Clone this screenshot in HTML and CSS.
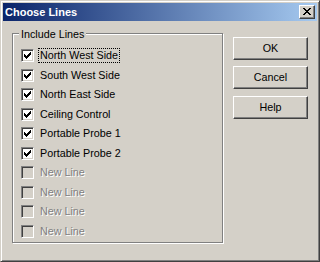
FILE: index.html
```
<!DOCTYPE html>
<html>
<head>
<meta charset="utf-8">
<title>Choose Lines</title>
<link rel="stylesheet" href="styles.css">
</head>
<body>
<div class="window">
  <div class="titlebar">
    <span class="title">Choose Lines</span>
    <div class="close">
      <svg width="8" height="7" viewBox="0 0 8 7" shape-rendering="crispEdges"><path d="M0 0h2v1h-2zM6 0h2v1h-2zM1 1h2v1h-2zM5 1h2v1h-2zM2 2h4v1h-4zM3 3h2v1h-2zM2 4h4v1h-4zM1 5h2v1h-2zM5 5h2v1h-2zM0 6h2v1h-2zM6 6h2v1h-2z" fill="#000"/></svg>
    </div>
  </div>
  <div class="content">
    <div class="group">
      <div class="legend">Include Lines</div>
      <ul class="items">
        <li class="item"><span class="cb checked"><svg width="7" height="7" viewBox="0 0 7 7" shape-rendering="crispEdges"><path d="M0 2h1v3h-1zM1 3h1v3h-1zM2 4h1v3h-1zM3 3h1v3h-1zM4 2h1v3h-1zM5 1h1v3h-1zM6 0h1v3h-1z" fill="#000"/></svg></span><span class="label focus">North West Side</span></li>
        <li class="item"><span class="cb checked"><svg width="7" height="7" viewBox="0 0 7 7" shape-rendering="crispEdges"><path d="M0 2h1v3h-1zM1 3h1v3h-1zM2 4h1v3h-1zM3 3h1v3h-1zM4 2h1v3h-1zM5 1h1v3h-1zM6 0h1v3h-1z" fill="#000"/></svg></span><span class="label">South West Side</span></li>
        <li class="item"><span class="cb checked"><svg width="7" height="7" viewBox="0 0 7 7" shape-rendering="crispEdges"><path d="M0 2h1v3h-1zM1 3h1v3h-1zM2 4h1v3h-1zM3 3h1v3h-1zM4 2h1v3h-1zM5 1h1v3h-1zM6 0h1v3h-1z" fill="#000"/></svg></span><span class="label">North East Side</span></li>
        <li class="item"><span class="cb checked"><svg width="7" height="7" viewBox="0 0 7 7" shape-rendering="crispEdges"><path d="M0 2h1v3h-1zM1 3h1v3h-1zM2 4h1v3h-1zM3 3h1v3h-1zM4 2h1v3h-1zM5 1h1v3h-1zM6 0h1v3h-1z" fill="#000"/></svg></span><span class="label">Ceiling Control</span></li>
        <li class="item"><span class="cb checked"><svg width="7" height="7" viewBox="0 0 7 7" shape-rendering="crispEdges"><path d="M0 2h1v3h-1zM1 3h1v3h-1zM2 4h1v3h-1zM3 3h1v3h-1zM4 2h1v3h-1zM5 1h1v3h-1zM6 0h1v3h-1z" fill="#000"/></svg></span><span class="label">Portable Probe 1</span></li>
        <li class="item"><span class="cb checked"><svg width="7" height="7" viewBox="0 0 7 7" shape-rendering="crispEdges"><path d="M0 2h1v3h-1zM1 3h1v3h-1zM2 4h1v3h-1zM3 3h1v3h-1zM4 2h1v3h-1zM5 1h1v3h-1zM6 0h1v3h-1z" fill="#000"/></svg></span><span class="label">Portable Probe 2</span></li>
        <li class="item disabled"><span class="cb"></span><span class="label">New Line</span></li>
        <li class="item disabled"><span class="cb"></span><span class="label">New Line</span></li>
        <li class="item disabled"><span class="cb"></span><span class="label">New Line</span></li>
        <li class="item disabled"><span class="cb"></span><span class="label">New Line</span></li>
      </ul>
    </div>
    <div class="buttons">
      <div class="btn">OK</div>
      <div class="btn">Cancel</div>
      <div class="btn">Help</div>
    </div>
  </div>
</div>
</body>
</html>
```
FILE: styles.css
```
html, body {
  margin: 0;
  padding: 0;
  background: #d4d0c8;
}

body {
  font-family: "Liberation Sans", Arial, sans-serif;
  font-size: 10.75px;
  color: #000;
}

.window {
  box-sizing: border-box;
  width: 320px;
  height: 262px;
  background: #d4d0c8;
  border: 1px solid;
  border-color: #d4d0c8 #404040 #404040 #d4d0c8;
  box-shadow: inset 1px 1px 0 #fff, inset -1px -1px 0 #808080;
  padding: 2px;
  display: flex;
  flex-direction: column;
}

.titlebar {
  height: 18px;
  display: flex;
  align-items: flex-start;
  justify-content: space-between;
  background: linear-gradient(to right, #0a246a, #a6caf0);
  padding: 0 2px 0 2px;
}

.title {
  color: #fff;
  font-weight: bold;
  font-size: 11px;
  line-height: 18px;
}

.close {
  box-sizing: border-box;
  width: 16px;
  height: 14px;
  margin-top: 2px;
  background: #d4d0c8;
  border: 1px solid;
  border-color: #fff #404040 #404040 #fff;
  box-shadow: inset -1px -1px 0 #808080;
  display: flex;
  align-items: flex-start;
  justify-content: flex-start;
  padding: 2px 0 0 3px;
}

.close svg {
  display: block;
}

.content {
  display: flex;
  align-items: flex-start;
  padding: 12px 0 0 9px;
}

.group {
  position: relative;
  box-sizing: border-box;
  width: 211px;
  height: 210px;
  border: 1px solid #808080;
  box-shadow: inset 1px 1px 0 #fff, 1px 1px 0 #fff;
}

.legend {
  position: absolute;
  left: 6px;
  top: -6px;
  padding: 0 2px;
  line-height: 13px;
  background: #d4d0c8;
}

.items {
  list-style: none;
  margin: 0;
  padding: 15px 0 0 8px;
  display: flex;
  flex-direction: column;
  gap: 6.5px;
}

.item {
  height: 13px;
  display: flex;
  align-items: flex-start;
}

.cb {
  box-sizing: border-box;
  width: 13px;
  height: 13px;
  flex: none;
  background: #fff;
  border: 1px solid;
  border-color: #808080 #fff #fff #808080;
  box-shadow: inset 1px 1px 0 #404040, inset -1px -1px 0 #d4d0c8;
  padding: 2px 0 0 2px;
}

.cb svg {
  display: block;
}

.label {
  margin: -1px 0 0 4px;
  padding: 0 1px;
  border: 1px dotted transparent;
  line-height: 13px;
  white-space: nowrap;
}

.label.focus {
  border-color: #000;
}

.disabled .cb {
  background: #d4d0c8;
}

.disabled .label {
  color: #808080;
  text-shadow: 1px 1px 0 #fff;
}

.buttons {
  display: flex;
  flex-direction: column;
  gap: 6.25px;
  margin-left: 10px;
  padding-top: 4px;
}

.btn {
  box-sizing: border-box;
  width: 75px;
  height: 23px;
  border: 1px solid;
  border-color: #fff #404040 #404040 #fff;
  box-shadow: inset -1px -1px 0 #808080;
  display: flex;
  align-items: center;
  justify-content: center;
  line-height: 13px;
}
```
